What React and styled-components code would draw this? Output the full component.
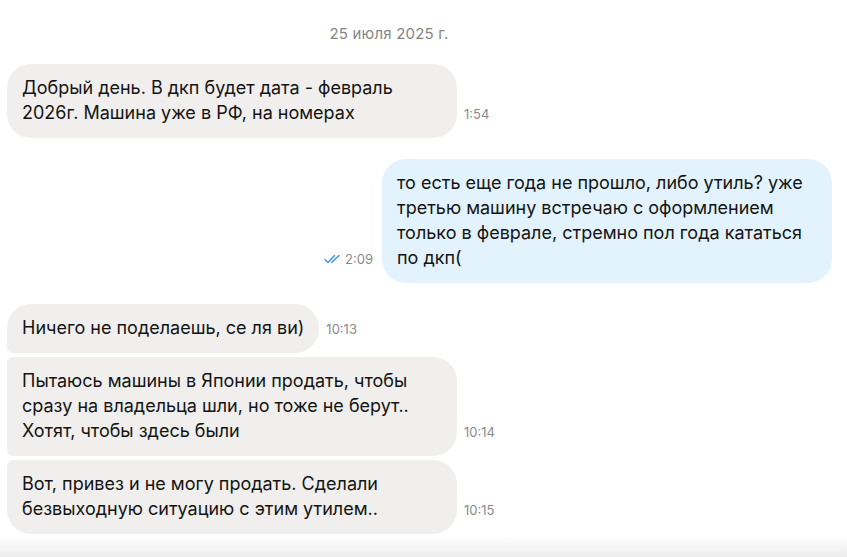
import React from "react";
import styled, { createGlobalStyle } from "styled-components";

const GlobalStyle = createGlobalStyle`
    html, body {
        margin: 0;
        padding: 0;
        background: #ffffff;
    }
    body {
        font-family: Inter, "Noto Sans", "Liberation Sans", sans-serif;
        color: #111111;
        -webkit-font-smoothing: antialiased;
    }
`;

const messages = [
    { id: 1, out: false, time: "1:54", pos: "single", text: "Добрый день. В дкп будет дата - февраль 2026г. Машина уже в РФ, на номерах" },
    { id: 2, out: true, time: "2:09", pos: "single", text: "то есть еще года не прошло, либо утиль? уже третью машину встречаю с оформлением только в феврале, стремно пол года кататься по дкп(" },
    { id: 3, out: false, time: "10:13", pos: "first", text: "Ничего не поделаешь, се ля ви)" },
    { id: 4, out: false, time: "10:14", pos: "middle", text: "Пытаюсь машины в Японии продать, чтобы сразу на владельца шли, но тоже не берут.. Хотят, чтобы здесь были" },
    { id: 5, out: false, time: "10:15", pos: "last", text: "Вот, привез и не могу продать. Сделали безвыходную ситуацию с этим утилем.." },
];

const radius = (pos) => {
    switch (pos) {
        case "first": return "24px 24px 24px 6px";
        case "middle": return "6px 24px 24px 6px";
        case "last": return "6px 24px 24px 24px";
        default: return "24px";
    }
};

const DoubleCheck = () => (
    <svg width="17" height="10" viewBox="0 0 17 10" fill="none">
        <path d="M1 5.5 L4 8.5 L10.5 1.5" stroke="#3a95e8" strokeWidth="1.4" strokeLinecap="round" strokeLinejoin="round" />
        <path d="M7.5 8.5 L15 1.5" stroke="#3a95e8" strokeWidth="1.4" strokeLinecap="round" strokeLinejoin="round" />
    </svg>
);

const App = () => (
    <>
        <GlobalStyle />
        <Chat>
            <DateLabel>25 июля 2025 г.</DateLabel>
            <Feed>
                {messages.map((m) => (
                    <Row key={m.id} $out={m.out} $grouped={m.pos === "middle" || m.pos === "last"}>
                        <Bubble $out={m.out} $pos={m.pos}>{m.text}</Bubble>
                        <Time>
                            {m.out && <DoubleCheck />}
                            {m.time}
                        </Time>
                    </Row>
                ))}
            </Feed>
            <Fade />
        </Chat>
    </>
);

const Chat = styled.div`
    width: 847px;
    height: 557px;
    display: flex;
    flex-direction: column;
    overflow: hidden;
`;

const DateLabel = styled.div`
    padding: 24px 69px 0 0;
    height: 21px;
    text-align: center;
    font-size: 15px;
    line-height: 20px;
    letter-spacing: 0.2px;
    color: #858585;
`;

const Feed = styled.div`
    flex: 1;
    display: flex;
    flex-direction: column;
    padding: 19px 15px 0 7px;
`;

const Row = styled.div`
    display: flex;
    flex-direction: ${(p) => (p.$out ? "row-reverse" : "row")};
    align-items: flex-end;
    gap: ${(p) => (p.$out ? "9px" : "7px")};
    margin-top: ${(p) => (p.$grouped ? "4px" : "21px")};
    &:first-child {
        margin-top: 0;
    }
`;

const Bubble = styled.div`
    box-sizing: border-box;
    max-width: 450px;
    padding: 11px 15px 13px;
    border-radius: ${(p) => radius(p.$pos)};
    background: ${(p) => (p.$out ? "#e3f3fd" : "#f0efed")};
    font-size: 18px;
    line-height: 25px;
    color: #141414;
`;

const Time = styled.div`
    display: flex;
    align-items: center;
    gap: 4px;
    margin-bottom: 16px;
    font-size: 13px;
    line-height: 16px;
    color: #8a8a8a;
    white-space: nowrap;
`;

const Fade = styled.div`
    height: 22px;
    flex-shrink: 0;
    background: linear-gradient(to bottom, rgba(240, 240, 240, 0), #ececec);
`;

export default App;
